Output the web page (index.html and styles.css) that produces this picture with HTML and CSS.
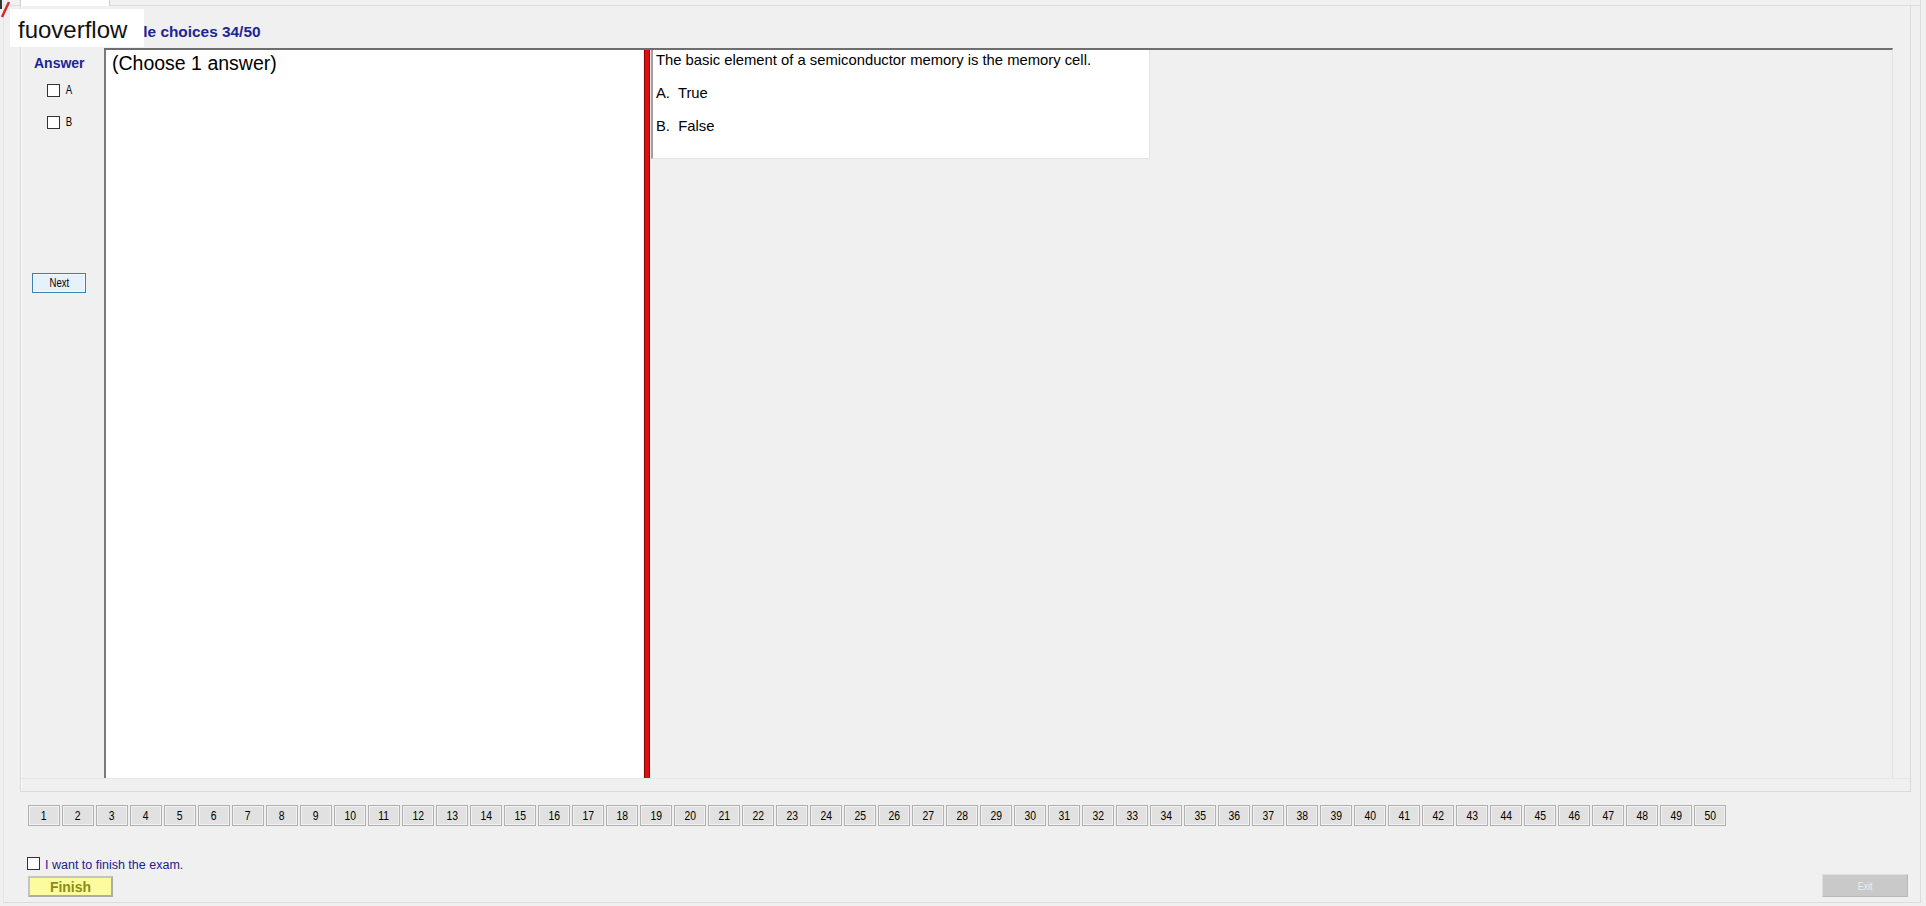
FILE: index.html
```html
<!DOCTYPE html>
<html lang="en">
<head>
    <meta charset="UTF-8">
    <title>Exam</title>
    <link rel="stylesheet" href="styles.css">
</head>
<body>
    <div class="window">
        <div class="tabs">
            <div class="tab"></div>
        </div>

        <div class="tabpage">
            <div class="tab-title">Multiple choices 34/50</div>

            <div class="main">
                <div class="answer-col">
                    <div class="answer-title">Answer</div>
                    <div class="option first"><span class="check"></span><span class="opt-label narrow">A</span></div>
                    <div class="option"><span class="check"></span><span class="opt-label narrow">B</span></div>
                    <button class="btn-next"><span class="narrow">Next</span></button>
                </div>

                <div class="quiz">
                    <div class="left-pane">
                        <div class="choose">(Choose 1 answer)</div>
                    </div>
                    <div class="splitter"></div>
                    <div class="right-pane">
                        <div class="question">
                            <p>The basic element of a semiconductor memory is the memory cell.</p>
                            <p>A.&nbsp; True</p>
                            <p>B.&nbsp; False</p>
                        </div>
                    </div>
                </div>
            </div>
        </div>

        <div class="numbers">
            <button><span class="narrow">1</span></button><button><span class="narrow">2</span></button>
            <button><span class="narrow">3</span></button><button><span class="narrow">4</span></button>
            <button><span class="narrow">5</span></button><button><span class="narrow">6</span></button>
            <button><span class="narrow">7</span></button><button><span class="narrow">8</span></button>
            <button><span class="narrow">9</span></button><button><span class="narrow">10</span></button>
            <button><span class="narrow">11</span></button><button><span class="narrow">12</span></button>
            <button><span class="narrow">13</span></button><button><span class="narrow">14</span></button>
            <button><span class="narrow">15</span></button><button><span class="narrow">16</span></button>
            <button><span class="narrow">17</span></button><button><span class="narrow">18</span></button>
            <button><span class="narrow">19</span></button><button><span class="narrow">20</span></button>
            <button><span class="narrow">21</span></button><button><span class="narrow">22</span></button>
            <button><span class="narrow">23</span></button><button><span class="narrow">24</span></button>
            <button><span class="narrow">25</span></button><button><span class="narrow">26</span></button>
            <button><span class="narrow">27</span></button><button><span class="narrow">28</span></button>
            <button><span class="narrow">29</span></button><button><span class="narrow">30</span></button>
            <button><span class="narrow">31</span></button><button><span class="narrow">32</span></button>
            <button><span class="narrow">33</span></button><button><span class="narrow">34</span></button>
            <button><span class="narrow">35</span></button><button><span class="narrow">36</span></button>
            <button><span class="narrow">37</span></button><button><span class="narrow">38</span></button>
            <button><span class="narrow">39</span></button><button><span class="narrow">40</span></button>
            <button><span class="narrow">41</span></button><button><span class="narrow">42</span></button>
            <button><span class="narrow">43</span></button><button><span class="narrow">44</span></button>
            <button><span class="narrow">45</span></button><button><span class="narrow">46</span></button>
            <button><span class="narrow">47</span></button><button><span class="narrow">48</span></button>
            <button><span class="narrow">49</span></button><button><span class="narrow">50</span></button>
        </div>

        <div class="finish-check">
            <span class="check"></span>
            <span class="finish-text">I want to finish the exam.</span>
        </div>

        <div class="footer">
            <button class="btn-finish">Finish</button>
            <button class="btn-exit"><span class="narrow">Exit</span></button>
        </div>
    </div>

    <div class="watermark">fuoverflow</div>

    <svg class="corner" width="14" height="20" viewBox="0 0 14 20">
        <line x1="1" y1="0" x2="1" y2="9" stroke="#333" stroke-width="2"/>
        <line x1="2" y1="17" x2="9" y2="2" stroke="#d42a2a" stroke-width="2.5"/>
    </svg>
</body>
</html>
```

FILE: styles.css
```css
body {
    margin: 0;
    background: #f0f0f0;
    font-family: "Liberation Sans", Arial, sans-serif;
    color: #000;
}

.narrow {
    display: inline-block;
    transform: scaleX(0.8);
}

.window {
    margin-left: 3px;
    width: 1918px;
    height: 903px;
    box-sizing: border-box;
    border-left: 1px solid #e6e6e6;
    border-right: 1px solid #dcdcdc;
    border-bottom: 1px solid #dcdcdc;
}

.tabs {
    height: 6px;
    padding-left: 16px;
    border-bottom: 1px solid #dedede;
    box-sizing: border-box;
}

.tab {
    width: 90px;
    height: 6px;
    background: #fff;
    border-left: 1px solid #cfcfcf;
    border-right: 1px solid #cfcfcf;
    box-sizing: border-box;
}

.tabpage {
    margin-left: 16px;
    width: 1891px;
    height: 786px;
    box-sizing: border-box;
    border: 1px solid #dadada;
    border-top: none;
    box-shadow: inset 1px 0 0 #fafafa;
}

.tab-title {
    height: 42px;
    box-sizing: border-box;
    padding: 18px 0 0 77px;
    font-size: 15.4px;
    line-height: 16px;
    font-weight: bold;
    color: #1c2594;
}

.main {
    display: flex;
    height: 730px;
    border-bottom: 1px solid #e6e6e6;
}

.answer-col {
    width: 83px;
    display: flex;
    flex-direction: column;
    align-items: flex-start;
}

.answer-title {
    margin: 7px 0 0 13px;
    font-size: 14px;
    line-height: 16px;
    font-weight: bold;
    color: #1c2594;
}

.option {
    display: flex;
    align-items: center;
    gap: 5px;
    margin: 19px 0 0 26px;
    height: 13px;
}

.option.first {
    margin-top: 13px;
}

.check {
    display: inline-block;
    width: 13px;
    height: 13px;
    box-sizing: border-box;
    border: 1px solid #333;
    background: #fff;
}

.opt-label {
    font-size: 12px;
    line-height: 13px;
}

.btn-next {
    margin: 144px 0 0 11px;
    width: 54px;
    height: 20px;
    padding: 0;
    background: #e5f1fb;
    border: 1px solid #3c7fb1;
    box-shadow: inset 0 0 0 1px #f4f9fd;
    font-family: "Liberation Sans", Arial, sans-serif;
    font-size: 12px;
    color: #000;
}

.quiz {
    flex: 1;
    display: flex;
    margin-right: 17px;
    border-top: 2px solid #6e6e6e;
    border-right: 1px solid #e2e2e2;
}

.left-pane {
    width: 537px;
    background: #fff;
    border-left: 2px solid #7a7a7a;
}

.choose {
    padding: 6px 0 0 6px;
    font-size: 19.5px;
    line-height: 14px;
}

.splitter {
    width: 6px;
    margin-left: 1px;
    background: #dc1010;
    border-left: 1px solid #8e0000;
    border-right: 1px solid #a80000;
    box-sizing: border-box;
}

.right-pane {
    flex: 1;
    background: #f0f0f0;
}

.question {
    width: 499px;
    margin-left: 1px;
    box-sizing: border-box;
    padding: 1px 0 23px 3px;
    background: #fff;
    border-left: 2px solid #a0a0a0;
    border-right: 1px solid #e3e3e3;
    border-bottom: 1px solid #e3e3e3;
    font-size: 14.8px;
    line-height: 18px;
}

.question p {
    margin: 15px 0 0;
}

.question p:first-child {
    margin-top: 0;
}

.numbers {
    display: flex;
    gap: 2px;
    margin: 13px 0 0 24px;
}

.numbers button {
    width: 32px;
    height: 21px;
    padding: 0;
    background: #e1e1e1;
    border: 1px solid #b0b0b0;
    box-shadow: inset 0 0 0 1px #f2f2f2;
    font-family: "Liberation Sans", Arial, sans-serif;
    font-size: 13px;
    color: #000;
}

.finish-check {
    display: flex;
    align-items: flex-start;
    gap: 5px;
    margin: 31px 0 0 23px;
}

.finish-text {
    padding-top: 1px;
    font-size: 12.5px;
    line-height: 14px;
    color: #202090;
}

.footer {
    display: flex;
    justify-content: space-between;
    align-items: flex-end;
    margin: 2px 12px 0 24px;
}

.btn-finish {
    width: 85px;
    height: 21px;
    padding: 0;
    background: #fcfc9e;
    border: 2px solid #acacac;
    border-top-color: #c4c4c4;
    border-left-color: #c4c4c4;
    font-family: "Liberation Sans", Arial, sans-serif;
    font-size: 14px;
    font-weight: bold;
    color: #8c8c10;
}

.btn-exit {
    width: 86px;
    height: 23px;
    padding: 0;
    background: #c9c9c9;
    border: 1px solid #b8b8b8;
    border-top-color: #dedede;
    border-left-color: #dedede;
    font-family: "Liberation Sans", Arial, sans-serif;
    font-size: 11px;
    color: #ededed;
}

.watermark {
    position: absolute;
    left: 10px;
    top: 9px;
    width: 134px;
    height: 38px;
    box-sizing: border-box;
    padding: 6px 0 0 8px;
    background: #fff;
    font-size: 24px;
    line-height: 30px;
    color: #111;
}

.corner {
    position: absolute;
    left: 0;
    top: 0;
}
```
